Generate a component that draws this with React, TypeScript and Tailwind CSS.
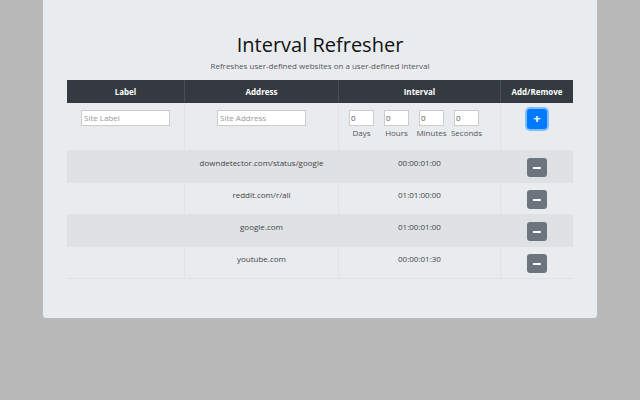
export default function App() {
  const rows = [
    ["", "downdetector.com/status/google", "00:00:01:00"],
    ["", "reddit.com/r/all", "01:01:00:00"],
    ["", "google.com", "01:00:01:00"],
    ["", "youtube.com", "00:00:01:30"],
  ];
  const cols = "grid grid-cols-[117px_154px_162px_73px]";
  const f = { fontFamily: '"Open Sans", "Noto Sans", sans-serif' };
  return (
    <div className="w-[640px] h-[400px] bg-[#b9b9b9] flex justify-center" style={f}>
      <div className="w-[554px] h-[318px] bg-[#e9ecef] rounded-b-[3px] flex flex-col items-center">
        <div className="mt-[32px] text-[20px] leading-[26px] text-[#111] font-medium">Interval Refresher</div>
        <div className="mt-[2px] text-[8px] leading-[12px] text-[#555]">Refreshes user-defined websites on a user-defined interval</div>
        <div className="mt-[8px] w-[506px] text-[8px]">
          <div className={`${cols} h-[23px] bg-[#343a40] text-white font-bold`}>
            {["Label", "Address", "Interval", "Add/Remove"].map((h, i) => (
              <div key={h} className={`flex items-center justify-center ${i ? "border-l border-[#454d55]" : ""}`}>{h}</div>
            ))}
          </div>
          <div className={`${cols} h-[48px] border-b border-[#dee2e6]`}>
            <div className="flex justify-center pt-[7px]"><div className="w-[89px] h-[16px] bg-white border border-[#ccc] text-[#999] pl-[2px] leading-[14px]">Site Label</div></div>
            <div className="flex justify-center pt-[7px] border-l border-[#dee2e6]"><div className="w-[89px] h-[16px] bg-white border border-[#ccc] text-[#999] pl-[2px] leading-[14px]">Site Address</div></div>
            <div className="flex pl-[10px] gap-[10px] pt-[7px] border-l border-[#dee2e6]">
              {["Days", "Hours", "Minutes", "Seconds"].map((l) => (
                <div key={l} className="w-[25px] flex flex-col items-center">
                  <div className="w-[25px] h-[16px] bg-white border border-[#ccc] text-[#555] pl-[1px] leading-[14px]">0</div>
                  <div className="text-[#555] mt-[2px] leading-[10px] whitespace-nowrap">{l}</div>
                </div>
              ))}
            </div>
            <div className="flex justify-center pt-[6px] border-l border-[#dee2e6]">
              <div className="w-[20px] h-[20px] rounded-[3px] bg-[#007bff] ring-2 ring-[#80bdff] text-white flex items-center justify-center text-[13px] font-bold">+</div>
            </div>
          </div>
          {rows.map((r, i) => (
            <div key={i} className={`${cols} h-[32px] border-b border-[#dee2e6] ${i % 2 === 0 ? "bg-[#dfe2e5]" : ""} text-[#444]`}>
              <div className="pt-[6px] text-center">{r[0]}</div>
              <div className="pt-[6px] text-center border-l border-[#dee2e6]">{r[1]}</div>
              <div className="pt-[6px] text-center border-l border-[#dee2e6]">{r[2]}</div>
              <div className="flex justify-center pt-[7px] border-l border-[#dee2e6]">
                <div className="w-[20px] h-[19px] rounded-[3px] bg-[#6c757d] flex items-center justify-center">
                  <div className="w-[8px] h-[2px] bg-white"></div>
                </div>
              </div>
            </div>
          ))}
        </div>
      </div>
    </div>
  );
}
